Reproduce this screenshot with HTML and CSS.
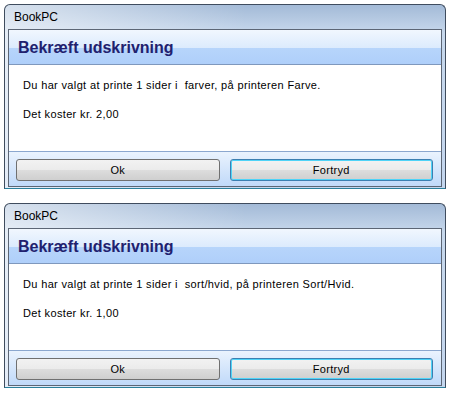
FILE: index.html
```html
<!DOCTYPE html>
<html lang="da">
<head>
    <meta charset="UTF-8">
    <meta name="viewport" content="width=device-width, initial-scale=1.0">
    <title>BookPC</title>
    <link rel="stylesheet" href="styles.css">
</head>
<body>

    <div class="window">
        <div class="titlebar">BookPC</div>
        <div class="client">
            <div class="header">Bekræft udskrivning</div>
            <div class="message">
                <p>Du har valgt at printe 1 sider i&nbsp; farver, på printeren Farve.</p>
                <p>Det koster kr. 2,00</p>
            </div>
            <div class="buttons">
                <button type="button">Ok</button>
                <button type="button" class="default">Fortryd</button>
            </div>
        </div>
    </div>

    <div class="window">
        <div class="titlebar">BookPC</div>
        <div class="client">
            <div class="header">Bekræft udskrivning</div>
            <div class="message">
                <p>Du har valgt at printe 1 sider i&nbsp; sort/hvid, på printeren Sort/Hvid.</p>
                <p>Det koster kr. 1,00</p>
            </div>
            <div class="buttons">
                <button type="button">Ok</button>
                <button type="button" class="default">Fortryd</button>
            </div>
        </div>
    </div>

</body>
</html>
```

FILE: styles.css
```css
body {
    font-family: 'Liberation Sans', Arial, sans-serif;
    background-color: #ffffff;
    margin: 0;
    padding: 4px 4px 0 4px;
    display: flex;
    flex-direction: column;
    gap: 14px;
}

.window {
    width: 434px;
    border: 1px solid #3f4c5e;
    border-bottom-color: #2b7f9c;
    border-radius: 6px 6px 0 0;
    background: linear-gradient(to right, rgba(255, 255, 255, 0.55), rgba(255, 255, 255, 0) 55%),
                linear-gradient(#a3bad7, #c7d8ec 28px, #c4d6ee);
    padding: 0 3px 1px 3px;
}

.titlebar {
    height: 24px;
    line-height: 24px;
    font-size: 12px;
    color: #000000;
    padding-left: 6px;
}

.client {
    border: 1px solid #5c6675;
    background-color: #ffffff;
}

.header {
    height: 20px;
    line-height: 20px;
    padding: 8px 9px 6px 9px;
    font-size: 16px;
    font-weight: bold;
    color: #21216e;
    background: linear-gradient(#f1f7fe, #dcebfd 52%, #b7d5fb 52%, #afcffa);
    border-bottom: 1px solid #7f98bd;
}

.message {
    height: 86px;
    padding: 14px 14px 0 14px;
    box-sizing: border-box;
    font-size: 11px;
    letter-spacing: 0.35px;
    color: #000000;
}

.message p {
    margin: 0 0 16px 0;
    line-height: 13px;
}

.buttons {
    display: flex;
    gap: 10px;
    padding: 7px 8px 5px 7px;
    border-top: 1px solid #8ba7cf;
    background: linear-gradient(#eaf3fe, #c0d9f9);
}

button {
    flex: 1;
    height: 22px;
    font-family: 'Liberation Sans', Arial, sans-serif;
    font-size: 11px;
    letter-spacing: 0.3px;
    color: #000000;
    border: 1px solid #707070;
    border-radius: 3px;
    background: linear-gradient(#f2f2f2, #ebebeb 50%, #dddddd 50%, #cfcfcf);
    padding: 0;
}

button.default {
    border-color: #3c7fb1;
    box-shadow: inset 0 0 0 1px #4fd3f7;
}
```
